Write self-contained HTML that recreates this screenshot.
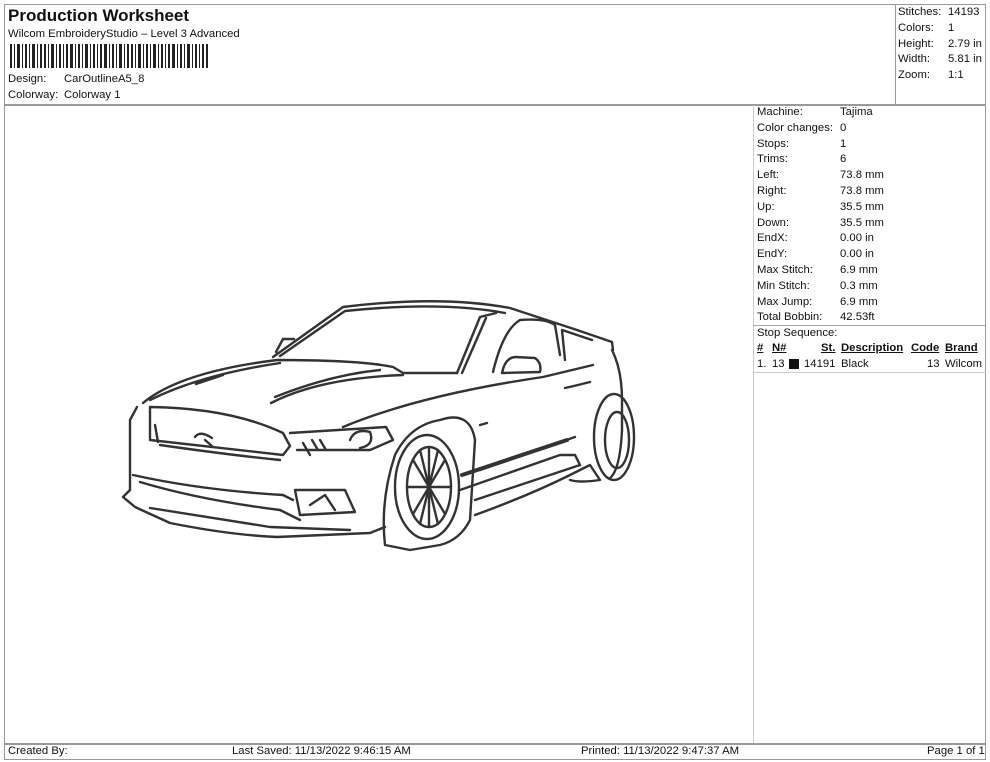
<!DOCTYPE html>
<html><head><meta charset="utf-8"><style>
body{margin:0;width:990px;height:762px;background:#fff;position:relative;overflow:hidden;font-family:"Liberation Sans",Arial,sans-serif;color:#111}
.a{position:absolute;white-space:nowrap}
.l{position:absolute;background:#999}
.s{font-size:11.3px}
</style></head><body>
<div class="l" style="left:4px;top:4px;width:982px;height:1px"></div>
<div class="l" style="left:4px;top:4px;width:1px;height:756px"></div>
<div class="l" style="left:985px;top:4px;width:1px;height:756px"></div>
<div class="l" style="left:4px;top:759px;width:982px;height:1px"></div>
<div class="l" style="left:4px;top:104px;width:982px;height:2px"></div>
<div class="l" style="left:895px;top:4px;width:1px;height:101px"></div>
<div class="l" style="left:753px;top:105px;width:1px;height:639px;background:#ccc"></div>
<div class="l" style="left:753px;top:325px;width:233px;height:1px;background:#aaa"></div>
<div class="l" style="left:753px;top:372px;width:233px;height:1px;background:#ccc"></div>
<div class="l" style="left:4px;top:743px;width:982px;height:2px"></div>

<div class="a" style="left:8px;top:6px;font-size:17px;font-weight:bold">Production Worksheet</div>
<div class="a s" style="left:8px;top:28px">Wilcom EmbroideryStudio – Level 3 Advanced</div>
<svg class="a" style="left:10px;top:44px" width="198" height="24">
<g fill="#222">
<rect x="0" y="0" width="2" height="24"/><rect x="4" y="0" width="1" height="24"/><rect x="7" y="0" width="3" height="24"/><rect x="12" y="0" width="1" height="24"/><rect x="15" y="0" width="2" height="24"/><rect x="19" y="0" width="1" height="24"/><rect x="22" y="0" width="3" height="24"/><rect x="27" y="0" width="1" height="24"/><rect x="30" y="0" width="2" height="24"/><rect x="34" y="0" width="2" height="24"/><rect x="38" y="0" width="1" height="24"/><rect x="41" y="0" width="3" height="24"/><rect x="46" y="0" width="1" height="24"/><rect x="49" y="0" width="2" height="24"/><rect x="53" y="0" width="1" height="24"/><rect x="56" y="0" width="2" height="24"/><rect x="60" y="0" width="3" height="24"/><rect x="65" y="0" width="1" height="24"/><rect x="68" y="0" width="2" height="24"/><rect x="72" y="0" width="1" height="24"/><rect x="75" y="0" width="3" height="24"/><rect x="80" y="0" width="1" height="24"/><rect x="83" y="0" width="2" height="24"/><rect x="87" y="0" width="1" height="24"/><rect x="90" y="0" width="2" height="24"/><rect x="94" y="0" width="3" height="24"/><rect x="99" y="0" width="1" height="24"/><rect x="102" y="0" width="2" height="24"/><rect x="106" y="0" width="1" height="24"/><rect x="109" y="0" width="3" height="24"/><rect x="114" y="0" width="1" height="24"/><rect x="117" y="0" width="2" height="24"/><rect x="121" y="0" width="2" height="24"/><rect x="125" y="0" width="1" height="24"/><rect x="128" y="0" width="3" height="24"/><rect x="133" y="0" width="1" height="24"/><rect x="136" y="0" width="2" height="24"/><rect x="140" y="0" width="1" height="24"/><rect x="143" y="0" width="3" height="24"/><rect x="148" y="0" width="1" height="24"/><rect x="151" y="0" width="2" height="24"/><rect x="155" y="0" width="1" height="24"/><rect x="158" y="0" width="2" height="24"/><rect x="162" y="0" width="3" height="24"/><rect x="167" y="0" width="1" height="24"/><rect x="170" y="0" width="2" height="24"/><rect x="174" y="0" width="1" height="24"/><rect x="177" y="0" width="3" height="24"/><rect x="182" y="0" width="1" height="24"/><rect x="185" y="0" width="2" height="24"/><rect x="189" y="0" width="1" height="24"/><rect x="192" y="0" width="2" height="24"/><rect x="196" y="0" width="2" height="24"/>
</g></svg>
<div class="a s" style="left:8px;top:73px">Design:</div><div class="a s" style="left:64px;top:73px">CarOutlineA5_8</div>
<div class="a s" style="left:8px;top:89px">Colorway:</div><div class="a s" style="left:64px;top:89px">Colorway 1</div>

<div class="a s" style="left:898px;top:5px;line-height:15.8px">Stitches:<br>Colors:<br>Height:<br>Width:<br>Zoom:</div>
<div class="a s" style="left:948px;top:5px;line-height:15.8px">14193<br>1<br>2.79 in<br>5.81 in<br>1:1</div>

<div class="a s" style="left:757px;top:105px;line-height:15.8px">Machine:<br>Color changes:<br>Stops:<br>Trims:<br>Left:<br>Right:<br>Up:<br>Down:<br>EndX:<br>EndY:<br>Max Stitch:<br>Min Stitch:<br>Max Jump:<br>Total Bobbin:<br>Stop Sequence:</div>
<div class="a s" style="left:840px;top:105px;line-height:15.8px">Tajima<br>0<br>1<br>6<br>73.8 mm<br>73.8 mm<br>35.5 mm<br>35.5 mm<br>0.00 in<br>0.00 in<br>6.9 mm<br>0.3 mm<br>6.9 mm<br>42.53ft</div>
<div class="a s" style="left:757px;top:342px;font-weight:bold;text-decoration:underline">#</div>
<div class="a s" style="left:772px;top:342px;font-weight:bold;text-decoration:underline">N#</div>
<div class="a s" style="left:821px;top:342px;font-weight:bold;text-decoration:underline">St.</div>
<div class="a s" style="left:841px;top:342px;font-weight:bold;text-decoration:underline">Description</div>
<div class="a s" style="left:911px;top:342px;font-weight:bold;text-decoration:underline">Code</div>
<div class="a s" style="left:945px;top:342px;font-weight:bold;text-decoration:underline">Brand</div>
<div class="a s" style="left:757px;top:358px">1.</div>
<div class="a s" style="left:772px;top:358px">13</div>
<div class="a" style="left:789px;top:359px;width:10px;height:10px;background:#111"></div>
<div class="a s" style="left:804px;top:358px">14191</div>
<div class="a s" style="left:841px;top:358px">Black</div>
<div class="a s" style="left:927px;top:358px">13</div>
<div class="a s" style="left:945px;top:358px">Wilcom</div>

<div class="a s" style="left:8px;top:745px">Created By:</div>
<div class="a s" style="left:232px;top:745px">Last Saved: 11/13/2022 9:46:15 AM</div>
<div class="a s" style="left:581px;top:745px">Printed: 11/13/2022 9:47:37 AM</div>
<div class="a s" style="left:927px;top:745px">Page 1 of 1</div>

<svg class="a" style="left:0;top:0" width="990" height="762" fill="none" stroke="#333" stroke-width="2.4" stroke-linejoin="round" stroke-linecap="round">
<path d="M273 357 L343 307 Q440 295 510 308 L577 330 L612 342 L613 350"/>
<path d="M280 356 L345 311 Q440 301 505 313"/>
<path d="M276 352 L283 339 L294 339"/>
<path d="M457 373 L480 317 L496 313 M462 373 L486 318"/>
<path d="M493 372 Q503 330 520 320 Q545 318 555 325 L560 355"/>
<path d="M565 360 L562 330 L592 340"/>
<path d="M502 373 Q505 358 515 357 L535 358 Q542 363 540 372 Z"/>
<path d="M612 350 Q622 370 622 400 L622 430 Q620 470 610 478"/>
<ellipse cx="614" cy="437" rx="20" ry="43"/>
<ellipse cx="617" cy="440" rx="12" ry="28"/>
<path d="M143 403 Q180 372 277 360 Q360 360 393 367 L403 373 L457 373"/>
<path d="M150 400 Q200 375 280 363"/>
<path d="M196 384 L223 375 M271 403 Q320 378 403 375 M275 397 Q330 375 380 370"/>
<path d="M343 427 Q420 395 543 377 L593 365"/>
<path d="M150 407 Q230 408 283 433 L290 446 L283 455 L150 440 Z"/>
<path d="M137 407 L130 420 L130 490 L123 497 L135 507 L170 523 Q230 535 277 537 L370 533 L385 527"/>
<path d="M133 475 Q200 490 283 495 L293 500"/>
<path d="M140 482 Q200 500 280 510 L300 520"/>
<path d="M150 508 L270 527 L350 530"/>
<path d="M155 425 L158 442 M160 445 Q230 455 280 460"/>
<path d="M290 433 L386 427 L393 440 L370 450 L297 450"/>
<path d="M350 440 Q355 428 370 432 Q375 445 360 448"/>
<path d="M303 443 L310 455 M312 440 L318 450 M320 440 L326 450"/>
<path d="M295 490 L345 490 L355 512 L300 515 Z"/>
<path d="M310 505 L325 495 L335 510"/>
<path d="M440 420 Q470 410 475 440 L470 520 Q460 540 440 545 L410 550 L385 545 Q380 500 395 455 Q410 425 440 420"/>
<ellipse cx="427" cy="487" rx="32" ry="52"/>
<ellipse cx="429" cy="487" rx="22" ry="40"/>
<path d="M429 447 L429 527 M407 487 L451 487 M413 460 L445 514 M445 460 L413 514 M420 450 L438 524 M438 450 L420 524"/>
<path d="M475 515 Q530 495 570 475 L590 465 L600 480 Q580 483 570 480"/>
<path d="M460 490 L560 455 L575 455 L580 465 L475 500"/>
<path d="M480 470 L575 437"/>
<path d="M462 475 L567 440" stroke-width="4"/>
<path d="M195 437 Q200 430 212 438 M205 440 L212 446"/>
<path d="M565 388 L578 385 L590 382 M480 425 L487 423"/>
</svg>
</body></html>
